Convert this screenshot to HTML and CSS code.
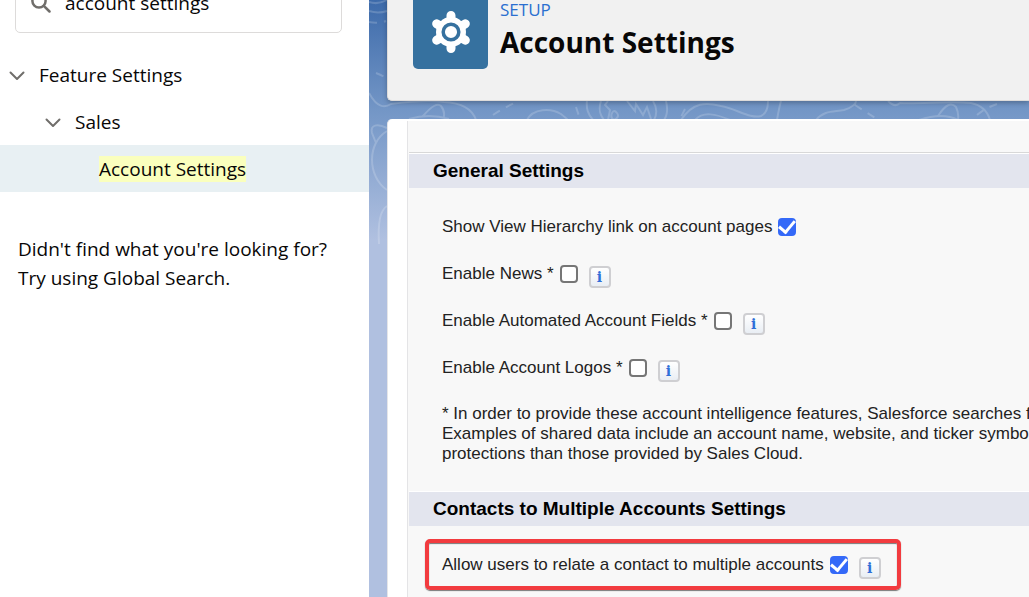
FILE: index.html
```html
<!DOCTYPE html>
<html lang="en">
<head>
<meta charset="utf-8">
<meta name="viewport" content="width=device-width, initial-scale=1">
<title>Account Settings | Setup</title>
<link rel="stylesheet" href="styles.css">
</head>
<body>
<div class="app">
  <aside class="sidebar">
    <div class="search">
      <svg class="search-icon" viewBox="0 0 20 20" aria-hidden="true"><circle cx="8" cy="8" r="6.6"/><path d="M12.8 12.8 18.5 18.5"/></svg>
      <input class="search-input" type="text" value="account settings" aria-label="Quick Find">
    </div>
    <nav class="tree" aria-label="Setup">
      <button class="node node-root" type="button" aria-expanded="true">
        <svg class="chevron" viewBox="0 0 16 10" aria-hidden="true"><path d="M1.5 1.5 8 8 14.5 1.5"/></svg>
        <span>Feature Settings</span>
      </button>
      <button class="node node-child" type="button" aria-expanded="true">
        <svg class="chevron" viewBox="0 0 16 10" aria-hidden="true"><path d="M1.5 1.5 8 8 14.5 1.5"/></svg>
        <span>Sales</span>
      </button>
      <a class="node node-leaf" href="#account-settings" aria-current="page"><mark class="match">Account Settings</mark></a>
    </nav>
    <p class="hint">Didn't find what you're looking for?<br>Try using Global Search.</p>
  </aside>

  <main class="main" id="account-settings">
    <svg class="topography" width="660" height="260" viewBox="0 0 660 260" aria-hidden="true">
      <path d="M0 2Q9 5 18 0M0 11Q9 14 18 11M0 93C8 108 16 108 22 104C45 101 60 100 75 102C95 103 104 111 107 120M54 116Q67 101 72 106Q77 112 74 120M40 119Q60 113 80 119M158 120C164 108 182 108 192 114Q197 118 199 120M218 100C217 109 219 114 224 120M232 101C229 110 231 115 235 120M239 101l-3 4 5 5-2 10M258 101l8 10 1-7 7 11 4-8 4 12M243 113q2-4 5 0t-3 7q-4-2-2-7M284 101q6 10 1 19M297 101q3 12-2 19M312 120C324 102 337 102 352 106C368 109 381 119 392 116Q399 113 399 101M326 120C334 111 347 114 361 120M412 101Q410 108 408 120M447 120C455 110 465 112 475 110Q487 106 487 101M519 101Q526 108 531 103C552 104 579 101 602 103Q617 106 621 120M550 120Q574 112 589 120M569 116Q580 99 587 107Q590 113 589 120"/>
      <path d="M18 128C8 123 1 125 3 133L7 143M18 131C-2 143-2 176 18 190M18 206Q8 212 10 244"/>
      <path class="dashed" d="M0 22q9 2 17-1M7 73q7 3 10 5M124 115q12-8 24-13M207 107l4 12M316 109l-5 10M486 105l28 18M608 115q8-7 20-11"/>
    </svg>

    <header class="page-header">
      <span class="tile">
        <svg class="gear" viewBox="0 0 40 42" aria-hidden="true">
          <path class="teeth" d="M20 4.500V37.500M5.700 12.800 34.300 29.200M5.700 29.200 34.300 12.800"/>
          <circle class="gear-body" cx="20" cy="21" r="15"/>
          <circle class="gear-ring" cx="20" cy="21" r="7.800"/>
        </svg>
      </span>
      <div class="titles">
        <p class="eyebrow">SETUP</p>
        <h1 class="title">Account Settings</h1>
      </div>
    </header>

    <div class="card">
      <form class="frame">
        <section class="group group-first">
          <h2 class="band">General Settings</h2>
          <div class="rows">
            <div class="row"><label for="hierarchy">Show View Hierarchy link on account pages</label><input class="check" id="hierarchy" type="checkbox" checked></div>
            <div class="row"><label for="news">Enable News *</label><input class="check" id="news" type="checkbox"><button class="info" type="button" aria-label="About news">i</button></div>
            <div class="row"><label for="fields">Enable Automated Account Fields *</label><input class="check" id="fields" type="checkbox"><button class="info" type="button" aria-label="About automated account fields">i</button></div>
            <div class="row"><label for="logos">Enable Account Logos *</label><input class="check" id="logos" type="checkbox"><button class="info" type="button" aria-label="About account logos">i</button></div>
            <p class="note">* In order to provide these account intelligence features, Salesforce searches f<br>Examples of shared data include an account name, website, and ticker symbo<br>protections than those provided by Sales Cloud.</p>
          </div>
        </section>
        <section class="group">
          <h2 class="band">Contacts to Multiple Accounts Settings</h2>
          <div class="callout">
            <div class="row"><label for="multi">Allow users to relate a contact to multiple accounts</label><input class="check" id="multi" type="checkbox" checked><button class="info" type="button" aria-label="About contacts to multiple accounts">i</button></div>
          </div>
        </section>
      </form>
    </div>
  </main>
</div>
</body>
</html>
```
FILE: styles.css
```css
* { box-sizing: border-box; }

body {
  margin: 0;
  overflow: hidden;
  color: #080707;
  background: #fff;
  font-family: "Segoe UI", "Open Sans", "Noto Sans", sans-serif;
}

h1, h2, p { margin: 0; }

button, input { font: inherit; color: inherit; }

.app { display: flex; height: 100vh; overflow: hidden; }

/* Sidebar */
.sidebar {
  flex: 0 0 369px;
  background: #fff;
  font-size: 19px;
}

.search {
  display: flex;
  align-items: center;
  gap: 14px;
  height: 60px;
  margin: -27px 27px 0 15px;
  padding: 0 15px;
  border: 1px solid #dddbda;
  border-radius: 5px;
}

.search-icon {
  flex: none;
  width: 20px;
  height: 20px;
  fill: none;
  stroke: #706e6b;
  stroke-width: 2.5;
  stroke-linecap: round;
}

.search-input {
  flex: 1;
  min-width: 0;
  padding: 0;
  border: 0;
  outline: 0;
  background: none;
}

.tree { margin-top: 18px; }

.node {
  display: flex;
  align-items: center;
  gap: 14px;
  width: 100%;
  height: 47px;
  padding: 0;
  border: 0;
  background: none;
  color: inherit;
  text-align: left;
  text-decoration: none;
}

.node-root { padding-left: 9px; }
.node-child { padding-left: 45px; }
.node-leaf { padding-left: 99px; background: #e8f0f3; }

.chevron {
  flex: none;
  width: 16px;
  height: 12px;
  padding-top: 2px;
  fill: none;
  stroke: #706e6b;
  stroke-width: 2;
  stroke-linecap: round;
  stroke-linejoin: round;
}

.match { background: #faffbd; color: inherit; line-height: 26px; }

.hint { padding: 43px 18px 0; line-height: 29px; }

/* Main area */
.main {
  position: relative;
  flex: 1;
  min-width: 0;
  display: flex;
  flex-direction: column;
  gap: 18px;
  padding-left: 18px;
  background: linear-gradient(#3c6aaa 0, #7396c6 110px, #b0c0e0 240px);
}

.topography {
  position: absolute;
  top: 0;
  left: 0;
  fill: none;
  stroke: #fff;
  stroke-opacity: 0.18;
  stroke-width: 2;
}

.dashed { stroke-dasharray: 8 7; }

.page-header {
  position: relative;
  display: flex;
  gap: 12px;
  margin-top: -33px;
  padding: 26px 0 31px 25px;
  border: 1px solid #dddbda;
  border-right: 0;
  border-radius: 5px 0 0 5px;
  background: #f1f1f1;
  box-shadow: 0 2px 5px rgba(0, 0, 0, 0.25);
}

.tile {
  flex: none;
  display: flex;
  align-items: center;
  justify-content: center;
  width: 75px;
  height: 75px;
  border-radius: 5px;
  background: #36719f;
}

.gear { width: 40px; height: 42px; fill: none; }
.teeth { stroke: #fff; stroke-width: 9; stroke-linecap: round; }
.gear-body { fill: #fff; }
.gear-ring { stroke: #36719f; stroke-width: 3.5; }

.eyebrow {
  padding-top: 4px;
  color: #2a6fd0;
  font-size: 17px;
  line-height: 24px;
}

.title { font-size: 28px; line-height: 40px; font-weight: 700; }

.card {
  position: relative;
  flex: 1;
  padding: 2px 0 0 19px;
  border-left: 1px solid #e5e5e8;
  border-radius: 5px 0 0 0;
  background: #fff;
}

.frame {
  height: 100%;
  border-left: 1px solid #e4e4e6;
  background: #f8f8f8;
  color: #222;
  font-family: "Liberation Sans", Arial, sans-serif;
  font-size: 17px;
}

.group-first { padding-top: 32px; }

.band {
  margin-left: 1px;
  padding-left: 24px;
  border-top: 1px solid #fff;
  background: #e3e5ee;
  color: #000;
  font-size: 19px;
  line-height: 34px;
}

.group-first .band { box-shadow: 0 -1px #d8d8d8; }

.rows { padding: 15px 0 27px 34px; }

.row { display: flex; align-items: center; height: 47px; white-space: nowrap; }

.check {
  appearance: none;
  flex: none;
  display: grid;
  place-content: center;
  width: 18px;
  height: 18px;
  margin: 1px 0 0 6px;
  border: 2px solid #767676;
  border-radius: 4px;
  background: #fff;
}

.check:checked {
  border-color: #3469f8;
  background: #3469f8;
}

.check:checked::before {
  content: "";
  width: 7px;
  height: 13px;
  margin-bottom: 5px;
  border: solid #fff;
  border-width: 0 3px 3px 0;
  transform: rotate(40deg);
}

.info {
  flex: none;
  width: 22px;
  height: 22px;
  margin: 6px 0 0 11px;
  padding: 0;
  border: 2px solid #cfcfd2;
  border-radius: 4px;
  background: linear-gradient(#fff, #e9eef4);
  color: #2f6fd8;
  font: bold 14px/18px "DejaVu Serif", serif;
  text-align: center;
}

.note { padding-top: 13px; line-height: 20px; white-space: nowrap; }

.callout {
  width: 476px;
  margin: 13px 0 0 17px;
  padding-left: 13px;
  border: 4px solid #f23b3f;
  border-radius: 5px;
  box-shadow: 0 1px 1px #777, inset 0 1px 1px #777;
}

.callout .row { height: 43px; }
```
